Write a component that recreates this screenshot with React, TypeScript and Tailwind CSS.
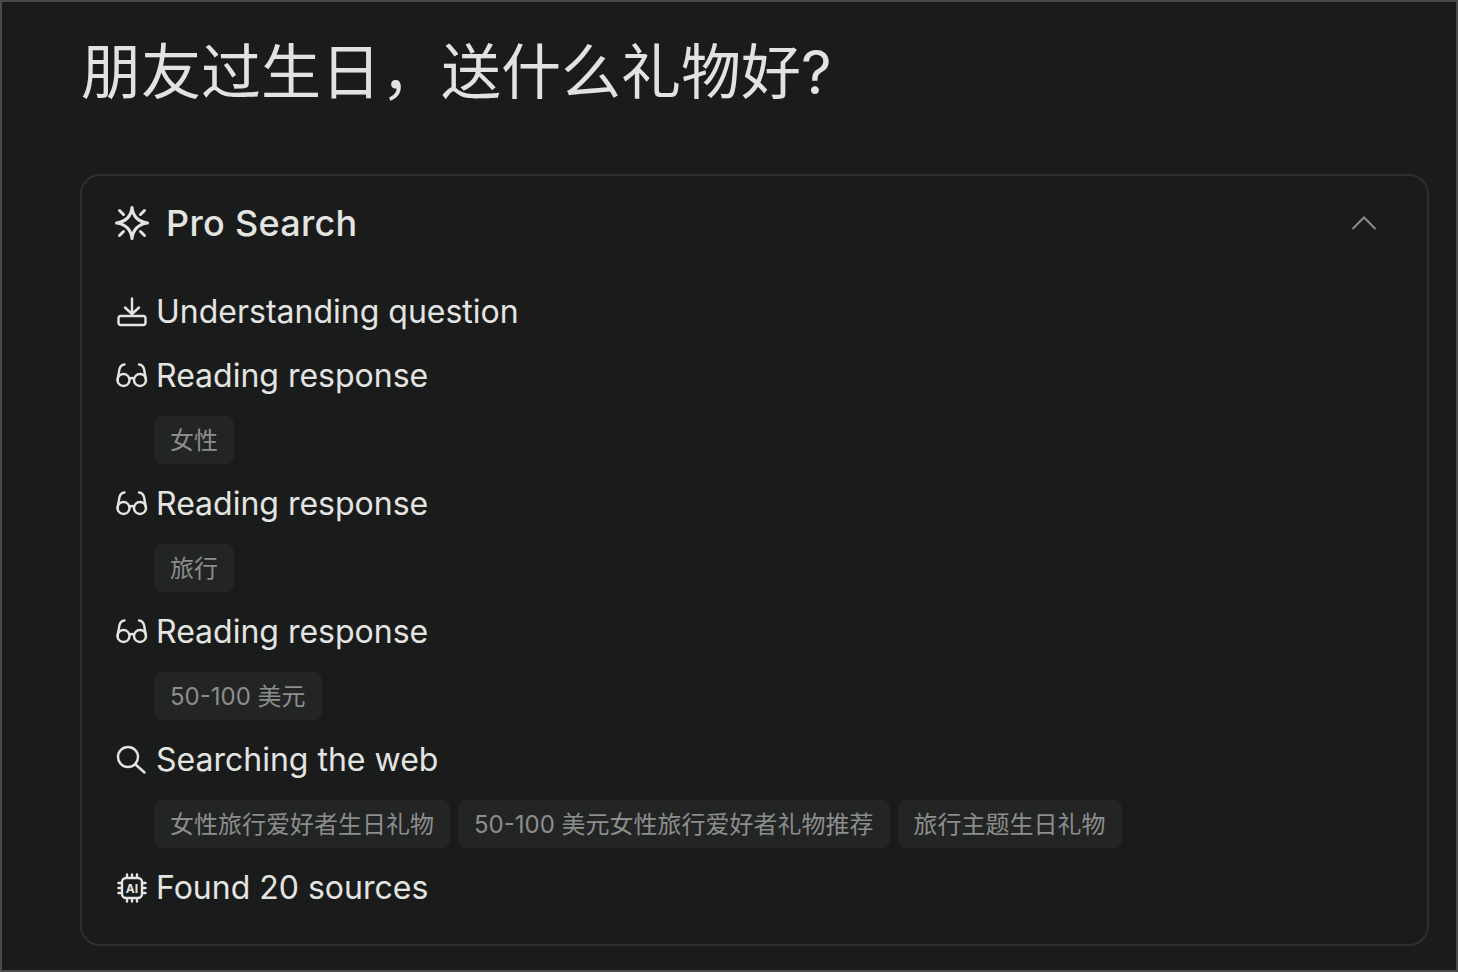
import type { ReactNode } from 'react';

const fontStack = "font-['Inter','Noto_Sans_CJK_SC',sans-serif]";

const SparkIcon = () => (
    <svg width="36" height="36" viewBox="0 0 36 36" fill="none" stroke="currentColor" strokeWidth="3" strokeLinecap="round" strokeLinejoin="round">
        <path d="M18 2.5 Q19.5 16 33.5 18 Q19.5 20 18 33.5 Q16.5 20 2.5 18 Q16.5 16 18 2.5 Z" />
        <path d="M5.5 5.5 L9.5 9.5 M30.5 5.5 L26.5 9.5 M5.5 30.5 L9.5 26.5 M30.5 30.5 L26.5 26.5" />
    </svg>
);

const InboxIcon = () => (
    <svg width="32" height="32" viewBox="0 0 32 32" fill="none" stroke="currentColor" strokeWidth="2.4" strokeLinecap="round" strokeLinejoin="round">
        <path d="M16 2.5 V18 M9 11.5 L16 18 L23 11.5" />
        <rect x="2.5" y="20" width="27" height="9" rx="2.5" />
    </svg>
);

const GlassesIcon = () => (
    <svg width="32" height="32" viewBox="0 0 32 32" fill="none" stroke="currentColor" strokeWidth="2.4" strokeLinecap="round" strokeLinejoin="round">
        <circle cx="7.5" cy="20" r="6" />
        <circle cx="24" cy="20" r="6" />
        <path d="M13.5 19 Q15.75 17 18 19" />
        <path d="M1.5 20 L3.5 9 Q4.5 5 8.5 4.5 M30 20 L28 9 Q27 5 23 4.5" />
    </svg>
);

const SearchIcon = () => (
    <svg width="32" height="32" viewBox="0 0 32 32" fill="none" stroke="currentColor" strokeWidth="2.4" strokeLinecap="round">
        <circle cx="12" cy="13" r="10" />
        <path d="M19.5 20.5 L28.5 28.5" />
    </svg>
);

const ChipIcon = () => (
    <svg width="32" height="32" viewBox="0 0 32 32" fill="none" stroke="currentColor" strokeWidth="2.4" strokeLinecap="round">
        <rect x="6" y="6" width="20" height="20" rx="4" />
        <path d="M11 2.5 V5 M16 2.5 V5 M21 2.5 V5 M11 27 V29.5 M16 27 V29.5 M21 27 V29.5 M2.5 11 H5 M2.5 16 H5 M2.5 21 H5 M27 11 H29.5 M27 16 H29.5 M27 21 H29.5" />
        <text x="16" y="20.5" textAnchor="middle" fontSize="12" fontWeight="700" fill="currentColor" stroke="none" fontFamily="Inter">AI</text>
    </svg>
);

const CollapseIcon = () => (
    <svg width="36" height="36" viewBox="0 0 36 36" fill="none" stroke="currentColor" strokeWidth="2">
        <path d="M6.5 24 L18 12.5 L29.5 24" />
    </svg>
);

const Step = ({ icon, label, tags }: { icon: ReactNode; label: string; tags?: string[] }) => (
    <div className="flex flex-col gap-4">
        <div className="flex h-12 items-center gap-2 pl-0.5 text-[32px] text-[#e4e4e2]">
            <span className="flex w-8 justify-center">{icon}</span>
            <span>{label}</span>
        </div>
        {tags && (
            <div className="flex gap-2 pl-[40px]">
                {tags.map((tag) => (
                    <span key={tag} className="flex h-12 items-center rounded-lg bg-[#232524] px-4 pt-px text-2xl text-[#8b8e8d]">
                        {tag}
                    </span>
                ))}
            </div>
        )}
    </div>
);

const App = () => {
    return (
        <div className={`h-[972px] w-[1458px] overflow-hidden border-2 border-[#4a4a4a] bg-[#1a1c1b] pl-[78px] pr-[27px] ${fontStack}`}>
            <h1 className="flex h-[172px] items-start pt-[30px] pl-px text-[60px] leading-[80px] font-normal text-[#e2e2e0]">
                朋友过生日，送什么礼物好?
            </h1>
            <div className="h-[772px] rounded-[20px] border-2 border-[#2e302f] pl-[32px] pr-[45px]">
                <div className="flex h-[94px] items-center justify-between">
                    <div className="flex items-center gap-4 text-[36px] font-[550] tracking-[0.3px] text-[#e4e4e2]">
                        <SparkIcon />
                        <span>Pro Search</span>
                    </div>
                    <span className="text-[#8b8e8d]">
                        <CollapseIcon />
                    </span>
                </div>
                <div className="mt-[18px] flex flex-col gap-4">
                    <Step icon={<InboxIcon />} label="Understanding question" />
                    <Step icon={<GlassesIcon />} label="Reading response" tags={['女性']} />
                    <Step icon={<GlassesIcon />} label="Reading response" tags={['旅行']} />
                    <Step icon={<GlassesIcon />} label="Reading response" tags={['50-100 美元']} />
                    <Step
                        icon={<SearchIcon />}
                        label="Searching the web"
                        tags={['女性旅行爱好者生日礼物', '50-100 美元女性旅行爱好者礼物推荐', '旅行主题生日礼物']}
                    />
                    <Step icon={<ChipIcon />} label="Found 20 sources" />
                </div>
            </div>
        </div>
    );
};

export default App;
